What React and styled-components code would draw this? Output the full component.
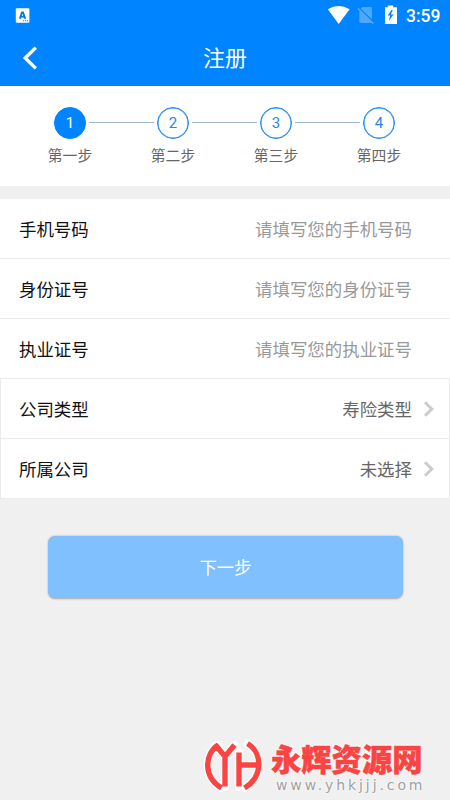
import React from 'react';
import styled, { createGlobalStyle } from 'styled-components';

const Global = createGlobalStyle`
  * { box-sizing: border-box; }
  body { margin: 0; background: #f0f0f0; }
`;

const Screen = styled.div`
  width: 450px;
  height: 800px;
  overflow: hidden;
  display: flex;
  flex-direction: column;
  background: #f0f0f0;
  font-family: Roboto, "Noto Sans CJK SC", sans-serif;
`;

const StatusBar = styled.div`
  height: 30px;
  flex: none;
  display: flex;
  align-items: center;
  justify-content: space-between;
  padding: 0 9px 0 15px;
  background: #0084ff;
  color: #fff;
`;

const StatusIcons = styled.div`
  display: flex;
  align-items: center;
`;

const Clock = styled.span`
  width: 35px;
  margin-left: 9px;
  padding-top: 2px;
  font-size: 17.5px;
  line-height: 30px;
  font-weight: 500;
  white-space: nowrap;
`;

const NavBar = styled.header`
  height: 56px;
  flex: none;
  display: grid;
  grid-template-columns: 60px 1fr 60px;
  align-items: center;
  background: #0084ff;
  color: #fff;
`;

const BackButton = styled.button`
  display: flex;
  width: 60px;
  height: 56px;
  padding: 16px 0 0 22px;
  border: 0;
  background: none;
`;

const Title = styled.h1`
  margin: 0;
  padding-top: 2px;
  font-size: 22px;
  line-height: 54px;
  font-weight: 400;
  text-align: center;
`;

const Steps = styled.div`
  height: 100px;
  flex: none;
  display: flex;
  align-items: flex-start;
  padding: 21px 40px 0 39px;
  background: #fff;
`;

const Step = styled.div`
  width: 62px;
  flex: none;
  display: flex;
  flex-direction: column;
  align-items: center;
`;

const StepNumber = styled.div`
  width: 32px;
  height: 32px;
  border-radius: 50%;
  border: 1px solid ${(p) => (p.$active ? '#0084ff' : '#1c86f0')};
  box-shadow: inset 0 0 0 0.5px ${(p) => (p.$active ? '#0084ff' : '#1c86f0')};
  background: ${(p) => (p.$active ? '#0084ff' : '#fff')};
  color: ${(p) => (p.$active ? '#fff' : '#2a86e4')};
  font-size: 15px;
  line-height: 31px;
  text-align: center;
`;

const StepLabel = styled.div`
  margin-top: 6px;
  font-size: 14.8px;
  line-height: 22px;
  color: #666;
  white-space: nowrap;
`;

const StepLine = styled.div`
  flex: 1;
  height: 1px;
  margin: 15px -12px 0;
  background: #9db8d2;
`;

const Form = styled.div`
  flex: none;
  margin-top: 13px;
`;

const Row = styled.div`
  height: 60px;
  display: flex;
  align-items: center;
  background: #fff;
  border: 0 solid #ebebeb;
  border-bottom-width: 1px;
  border-left-width: ${(p) => (p.$picker ? '1px' : 0)};
  border-right-width: ${(p) => (p.$picker ? '1px' : 0)};
  padding: ${(p) => (p.$picker ? '0 14px 0 18px' : '0 38px 0 19px')};
  font-size: 17.45px;
  line-height: 56px;
`;

const Label = styled.span`
  flex: 1;
  padding-top: 3px;
  color: #111;
`;

const Value = styled.span`
  padding-top: 3px;
  color: ${(p) => (p.$placeholder ? '#999' : '#666')};
`;

const Arrow = styled.svg`
  margin-left: 11px;
  flex: none;
`;

const NextButton = styled.button`
  width: 355px;
  height: 62px;
  flex: none;
  margin: 37px 0 0 48px;
  padding: 2px 0 0;
  border: 0;
  border-radius: 7px;
  background: #80c0ff;
  box-shadow: 0 0.5px 2px rgba(0, 0, 0, 0.32);
  color: #fff;
  font-family: inherit;
  font-size: 17.4px;
  line-height: 60px;
`;

const Watermark = styled.footer`
  display: flex;
  margin: auto 0 4px 201px;
`;

const Brand = styled.div`
  margin-left: 6px;
  padding-top: 4px;
  display: flex;
  flex-direction: column;
`;

const BrandName = styled.div`
  height: 37px;
  font-family: "Noto Sans CJK SC", sans-serif;
  font-size: 30.3px;
  line-height: 36px;
  font-weight: 900;
  color: #f94444;
  white-space: nowrap;
  -webkit-text-stroke: 0.5px #f94444;
  text-shadow: 0 0 3px #fff, 0 0 3px #fff, 0 0 2px #fff;
`;

const BrandUrl = styled.div`
  margin-left: 5px;
  height: 17px;
  font-family: "DejaVu Sans", sans-serif;
  font-size: 14px;
  line-height: 16px;
  letter-spacing: 2.9px;
  color: #a0a0a0;
  white-space: nowrap;
  text-shadow: 0 0 2px #fff, 0 0 2px #fff;
`;

const steps = ['第一步', '第二步', '第三步', '第四步'];

const fields = [
  { label: '手机号码', value: '请填写您的手机号码' },
  { label: '身份证号', value: '请填写您的身份证号' },
  { label: '执业证号', value: '请填写您的执业证号' },
  { label: '公司类型', value: '寿险类型', picker: true },
  { label: '所属公司', value: '未选择', picker: true },
];

const markPath =
  'M17 9C3.5 18 2 41 20.5 52M14.5 9 24 20.5 33.5 9M24 20V50.5M38 16.5V50.5M38 29H57M46.5 7.5C62 17 62 41 43.5 52';

function InputMethodIcon() {
  return (
    <svg width="15" height="15" viewBox="0 0 15 15">
      <rect x="0.8" y="0.2" width="13.6" height="14.6" rx="1" fill="#fff" />
      <path
        d="M6.3 3.4H8.7L11.2 10.8H9L8.6 9.4H6.4L6 10.8H3.8ZM7.5 5.4 6.8 7.9H8.2Z"
        fill="#0878e6"
        fillRule="evenodd"
      />
      <path d="M8 12.8h1.2M10 12.8h1.2M12 12.8h1.2" stroke="#0084ff" strokeWidth="1.1" />
    </svg>
  );
}

function SignalIcons() {
  return (
    <svg width="72" height="20" viewBox="325 5 72 20">
      <path d="M327.8 9.3Q338.7 2.6 349.6 9.3L338.7 24Z" fill="#fff" />
      <path
        d="M362.4 7H370.5q1.5 0 1.5 1.5V19.6L360.6 8.6ZM359.3 10.6 371.6 22.6q-.5.5-1.2.5h-9.6q-1.5 0-1.5-1.5Z"
        fill="#4da8ff"
      />
      <path d="M358 8.3 373.3 23.7" stroke="#66b5ff" strokeWidth="1.2" />
      <path d="M385 7.3h2.8V5.6h5.4v1.7h3.8V24h-12Z" fill="#fff" />
      <path d="m391.4 10-3.7 5.5h2.5L388.8 21l4.8-6.5h-2.8l2-4.5Z" fill="#0084ff" />
    </svg>
  );
}

function BrandMark() {
  return (
    <svg width="64" height="60" viewBox="0 0 64 60" fill="none">
      <path d={markPath} stroke="#fff" strokeWidth="8" strokeLinecap="round" strokeLinejoin="round" />
      <path d={markPath} stroke="#f94444" strokeWidth="5.4" />
    </svg>
  );
}

export default function App() {
  return (
    <Screen>
      <Global />
      <StatusBar>
        <InputMethodIcon />
        <StatusIcons>
          <SignalIcons />
          <Clock>3:59</Clock>
        </StatusIcons>
      </StatusBar>
      <NavBar>
        <BackButton aria-label="返回">
          <svg width="16" height="24" viewBox="0 0 16 24">
            <path d="M13.8 1.6 3.2 12 13.8 22.4" fill="none" stroke="#fff" strokeWidth="3.4" />
          </svg>
        </BackButton>
        <Title>注册</Title>
      </NavBar>
      <Steps>
        {steps.map((name, i) => (
          <React.Fragment key={name}>
            {i > 0 && <StepLine />}
            <Step>
              <StepNumber $active={i === 0}>{i + 1}</StepNumber>
              <StepLabel>{name}</StepLabel>
            </Step>
          </React.Fragment>
        ))}
      </Steps>
      <Form>
        {fields.map((f) => (
          <Row key={f.label} $picker={f.picker}>
            <Label>{f.label}</Label>
            <Value $placeholder={!f.picker}>{f.value}</Value>
            {f.picker && (
              <Arrow width="12" height="16" viewBox="0 0 12 16">
                <path d="M2 1.2 8.8 8 2 14.8" fill="none" stroke="#ccc" strokeWidth="3" />
              </Arrow>
            )}
          </Row>
        ))}
      </Form>
      <NextButton>下一步</NextButton>
      <Watermark>
        <BrandMark />
        <Brand>
          <BrandName>永辉资源网</BrandName>
          <BrandUrl>www.yhkjjj.com</BrandUrl>
        </Brand>
      </Watermark>
    </Screen>
  );
}
